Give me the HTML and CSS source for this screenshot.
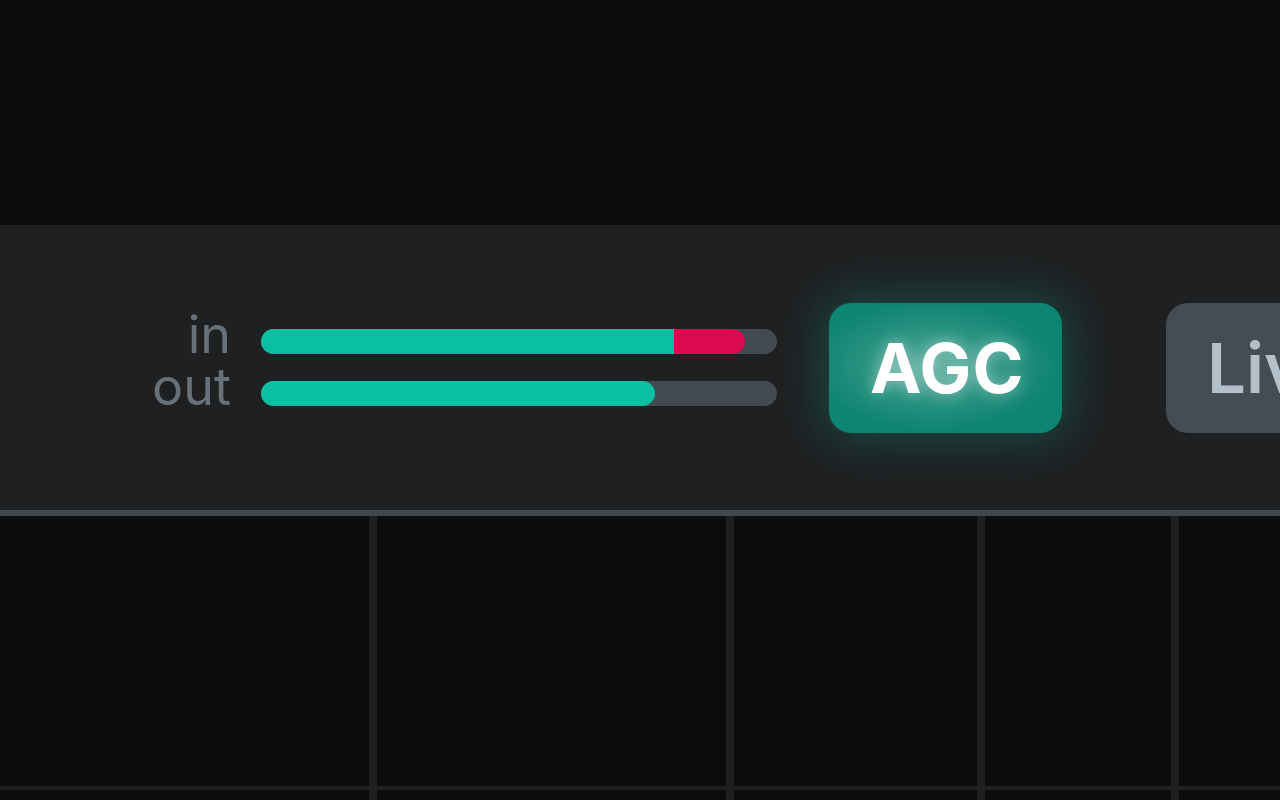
FILE: index.html
```html
<!DOCTYPE html>
<html lang="en">
<head>
  <meta charset="UTF-8">
  <title>Meters</title>
  <link rel="stylesheet" href="styles.css">
</head>
<body>

<div class="top-space"></div>

<div class="panel">
  <div class="labels">
    <div>in</div>
    <div>out</div>
  </div>
  <div class="meters">
    <div class="bar">
      <div class="fill" style="width: 413px"></div>
      <div class="peak" style="width: 71px"></div>
    </div>
    <div class="bar">
      <div class="fill round" style="width: 394px"></div>
    </div>
  </div>
  <button class="btn agc">AGC</button>
  <button class="btn live">Live</button>
</div>

<div class="grid">
  <div class="cell"></div>
  <div class="cell"></div>
  <div class="cell"></div>
  <div class="cell"></div>
  <div class="cell"></div>
  <div class="cell"></div>
  <div class="cell"></div>
  <div class="cell"></div>
  <div class="cell"></div>
  <div class="cell"></div>
</div>

</body>
</html>
```

FILE: styles.css
```css
body {
  margin: 0;
  padding: 0;
  background: #0d0d0d;
  font-family: 'Inter', 'Noto Sans', sans-serif;
  overflow: hidden;
  width: 1280px;
  height: 800px;
}
.top-space {
  height: 225px;
}
.panel {
  height: 285px;
  background: #1f2022;
  border-bottom: 6px solid #43484d;
  box-sizing: content-box;
  display: flex;
  align-items: center;
  padding-left: 140px;
  white-space: nowrap;
}
.labels {
  width: 91px;
  text-align: right;
  font-size: 52px;
  line-height: 52px;
  color: #68717a;
  margin-top: -13px;
  flex-shrink: 0;
}
.meters {
  margin-left: 30px;
  width: 516px;
  display: flex;
  flex-direction: column;
  gap: 27px;
  flex-shrink: 0;
}
.bar {
  height: 25px;
  border-radius: 13px;
  background: #444a51;
  display: flex;
  overflow: hidden;
}
.fill {
  background: #0bbfa2;
  height: 100%;
}
.fill.round {
  border-radius: 0 13px 13px 0;
}
.peak {
  background: #db0a50;
  height: 100%;
  border-radius: 0 13px 13px 0;
}
.btn {
  flex-shrink: 0;
  height: 130px;
  border: none;
  border-radius: 22px;
  font-family: 'Inter', 'Noto Sans', sans-serif;
  font-size: 69px;
  font-weight: 700;
  padding: 0 41px;
  cursor: pointer;
}
.agc {
  margin-left: 52px;
  width: 233px;
  color: #fff;
  letter-spacing: 1px;
  background: radial-gradient(ellipse at 45% 48%, rgba(255, 255, 255, 0.3) 0%, rgba(255, 255, 255, 0.1) 40%, rgba(255, 255, 255, 0) 68%), #0e8571;
  box-shadow: 0 0 45px 6px rgba(12, 191, 163, 0.28);
  text-shadow: 0 0 16px rgba(255, 255, 255, 0.45);
}
.live {
  margin-left: 104px;
  background: #454c53;
  color: #b4c0c9;
  font-weight: 600;
  text-align: left;
}
.grid {
  display: grid;
  grid-template-columns: 369px 349px 243px 186px 1fr;
  grid-template-rows: 270px 1fr;
  column-gap: 8px;
  row-gap: 4px;
  height: 284px;
  background: #1f2022;
}
.cell {
  background: #0d0d0d;
}
```
